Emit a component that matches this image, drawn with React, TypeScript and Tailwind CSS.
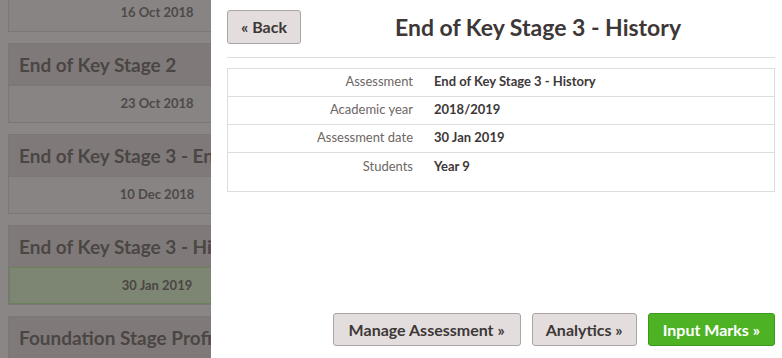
const font = { fontFamily: 'Lato, "Open Sans", "Liberation Sans", sans-serif' }

const cards = [
  { title: 'End of Key Stage 1', date: '16 Oct 2018', first: true },
  { title: 'End of Key Stage 2', date: '23 Oct 2018' },
  { title: 'End of Key Stage 3 - English', date: '10 Dec 2018' },
  { title: 'End of Key Stage 3 - History', date: '30 Jan 2019', active: true },
  { title: 'Foundation Stage Profile', date: '12 Feb 2019', last: true },
]

const details = [
  { label: 'Assessment', value: 'End of Key Stage 3 - History' },
  { label: 'Academic year', value: '2018/2019' },
  { label: 'Assessment date', value: '30 Jan 2019' },
  { label: 'Students', value: 'Year 9' },
]

export default function App() {
  return (
    <div className="relative h-[358px] w-[782px] overflow-hidden bg-[#8a8685]" style={font}>
      {/* 左侧评估列表（被遮罩，首卡只露出日期部分） */}
      <div className="-mt-[6px] flex w-[306px] flex-col gap-[11px] pl-2">
        {cards.map((c) => (
          <div key={c.date} className={`border border-[#7c7776] bg-[#888483] ${c.first ? 'border-t-0' : ''}`}>
            {!c.first && (
              <div className="flex h-[41px] items-center overflow-hidden whitespace-nowrap bg-[#7f7a79] px-[10px] pt-[2px] text-[19px] font-bold text-[#4b4644]">
                {c.title}
              </div>
            )}
            {!c.last && (
              <div
                className={
                  c.active
                    ? 'flex h-[37px] items-center justify-center border border-[#6a8258] bg-[#7d8673] text-[13px] font-bold text-[#4b4644]'
                    : `flex h-[37px] items-center justify-center text-[13px] font-bold text-[#4e4948] ${c.first ? '' : 'border-t border-[#7c7776]'}`
                }
              >
                {c.date}
              </div>
            )}
          </div>
        ))}
      </div>

      {/* 右侧详情抽屉 */}
      <div className="absolute right-0 top-0 flex h-full w-[571px] flex-col bg-white pb-[12px] pl-4 pr-[7px] pt-[10px]">
        <div className="flex items-center border-b border-[#dddddd] pb-[12px]">
          <button className="h-[34px] rounded-[3px] border border-[#aaa5a4] bg-[#e3dedd] px-[13px] text-[16px] font-bold text-[#3d3837]">
            « Back
          </button>
          <h1 className="flex-1 text-center text-[23px] font-bold text-[#3d3837]">
            End of Key Stage 3 - History
          </h1>
        </div>

        <div className="mt-[10px] border border-[#dddddd] pb-[10px]">
          {details.map((d, i) => (
            <div
              key={d.label}
              className={`flex h-[28px] items-center text-[13px] ${i < details.length - 1 ? 'border-b border-[#dddddd]' : ''}`}
            >
              <div className="w-[187px] pr-[2px] text-right text-[#6e6664]">{d.label}</div>
              <div className="pl-[19px] font-bold text-[#3d3837]">{d.value}</div>
            </div>
          ))}
        </div>

        <div className="mt-auto flex justify-end gap-[11px]">
          <button className="h-[33px] rounded-[3px] border border-[#aaa5a4] bg-[#e3dedd] px-[15px] text-[16px] font-bold text-[#3d3837]">
            Manage Assessment »
          </button>
          <button className="h-[33px] rounded-[3px] border border-[#aaa5a4] bg-[#e3dedd] px-[13px] text-[16px] font-bold text-[#3d3837]">
            Analytics »
          </button>
          <button className="h-[33px] rounded-[3px] border border-[#3b9a1c] bg-[#4db324] px-[14px] text-[16px] font-bold text-white">
            Input Marks »
          </button>
        </div>
      </div>
    </div>
  )
}
